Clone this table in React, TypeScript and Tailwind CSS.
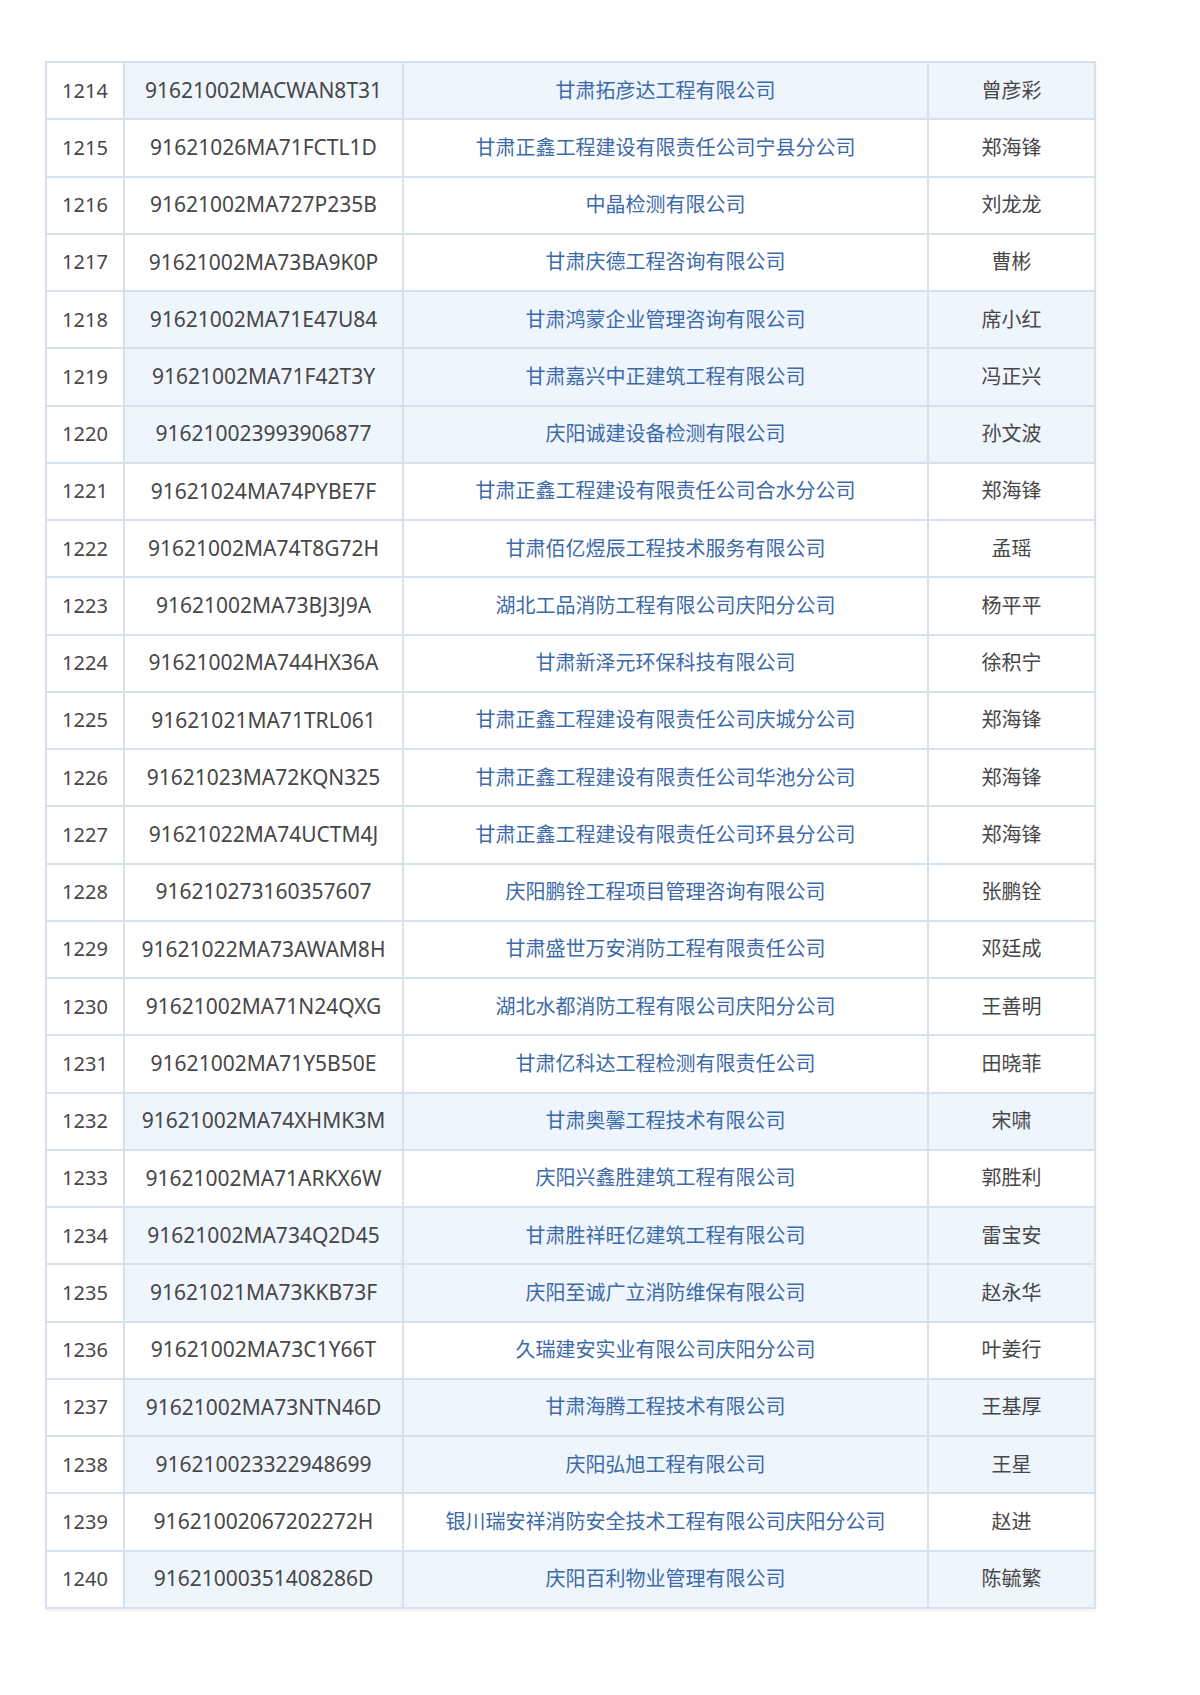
const rows: [string, string, string, string, boolean][] = [
  ["1214", "91621002MACWAN8T31", "甘肃拓彦达工程有限公司", "曾彦彩", true],
  ["1215", "91621026MA71FCTL1D", "甘肃正鑫工程建设有限责任公司宁县分公司", "郑海锋", false],
  ["1216", "91621002MA727P235B", "中晶检测有限公司", "刘龙龙", false],
  ["1217", "91621002MA73BA9K0P", "甘肃庆德工程咨询有限公司", "曹彬", false],
  ["1218", "91621002MA71E47U84", "甘肃鸿蒙企业管理咨询有限公司", "席小红", true],
  ["1219", "91621002MA71F42T3Y", "甘肃嘉兴中正建筑工程有限公司", "冯正兴", true],
  ["1220", "916210023993906877", "庆阳诚建设备检测有限公司", "孙文波", true],
  ["1221", "91621024MA74PYBE7F", "甘肃正鑫工程建设有限责任公司合水分公司", "郑海锋", false],
  ["1222", "91621002MA74T8G72H", "甘肃佰亿煜辰工程技术服务有限公司", "孟瑶", false],
  ["1223", "91621002MA73BJ3J9A", "湖北工品消防工程有限公司庆阳分公司", "杨平平", false],
  ["1224", "91621002MA744HX36A", "甘肃新泽元环保科技有限公司", "徐积宁", false],
  ["1225", "91621021MA71TRL061", "甘肃正鑫工程建设有限责任公司庆城分公司", "郑海锋", false],
  ["1226", "91621023MA72KQN325", "甘肃正鑫工程建设有限责任公司华池分公司", "郑海锋", false],
  ["1227", "91621022MA74UCTM4J", "甘肃正鑫工程建设有限责任公司环县分公司", "郑海锋", false],
  ["1228", "916210273160357607", "庆阳鹏铨工程项目管理咨询有限公司", "张鹏铨", false],
  ["1229", "91621022MA73AWAM8H", "甘肃盛世万安消防工程有限责任公司", "邓廷成", false],
  ["1230", "91621002MA71N24QXG", "湖北水都消防工程有限公司庆阳分公司", "王善明", false],
  ["1231", "91621002MA71Y5B50E", "甘肃亿科达工程检测有限责任公司", "田晓菲", false],
  ["1232", "91621002MA74XHMK3M", "甘肃奥馨工程技术有限公司", "宋啸", true],
  ["1233", "91621002MA71ARKX6W", "庆阳兴鑫胜建筑工程有限公司", "郭胜利", false],
  ["1234", "91621002MA734Q2D45", "甘肃胜祥旺亿建筑工程有限公司", "雷宝安", true],
  ["1235", "91621021MA73KKB73F", "庆阳至诚广立消防维保有限公司", "赵永华", true],
  ["1236", "91621002MA73C1Y66T", "久瑞建安实业有限公司庆阳分公司", "叶姜行", false],
  ["1237", "91621002MA73NTN46D", "甘肃海腾工程技术有限公司", "王基厚", true],
  ["1238", "916210023322948699", "庆阳弘旭工程有限公司", "王星", true],
  ["1239", "91621002067202272H", "银川瑞安祥消防安全技术工程有限公司庆阳分公司", "赵进", false],
  ["1240", "91621000351408286D", "庆阳百利物业管理有限公司", "陈毓繁", true],
];

export default function App() {
  return (
    <div
      className="min-h-[1695px] w-[1200px] bg-white pt-[61px] pl-[45px] text-[20px]"
      style={{ fontFamily: '"Noto Sans", "Noto Sans CJK SC", sans-serif' }}
    >
      {/* Registry table */}
      <div className="w-[1051px] border-t-2 border-l-2 border-[#d6e1eb] shadow-[0_2px_3px_rgba(0,0,0,0.06)]">
        {rows.map(([no, code, company, person, tinted]) => (
          <div key={no} className="flex h-[57.25px]">
            <div className="w-[78px] flex items-center justify-center border-r-2 border-b-2 border-[#d6e1eb] bg-white text-[#474747]">
              {no}
            </div>
            <div
              className={`w-[279px] flex items-center justify-center border-r-2 border-b-2 border-[#d6e1eb] text-[21px] text-[#474747] ${tinted ? "bg-[#eef5fd]" : "bg-white"}`}
            >
              {code}
            </div>
            <div
              className={`w-[525px] flex items-center justify-center border-r-2 border-b-2 border-[#d6e1eb] text-[#3d6aa8] ${tinted ? "bg-[#eef5fd]" : "bg-white"}`}
            >
              {company}
            </div>
            <div
              className={`w-[167px] flex items-center justify-center border-r-2 border-b-2 border-[#d6e1eb] text-[#474747] ${tinted ? "bg-[#eef5fd]" : "bg-white"}`}
            >
              {person}
            </div>
          </div>
        ))}
      </div>
    </div>
  );
}
